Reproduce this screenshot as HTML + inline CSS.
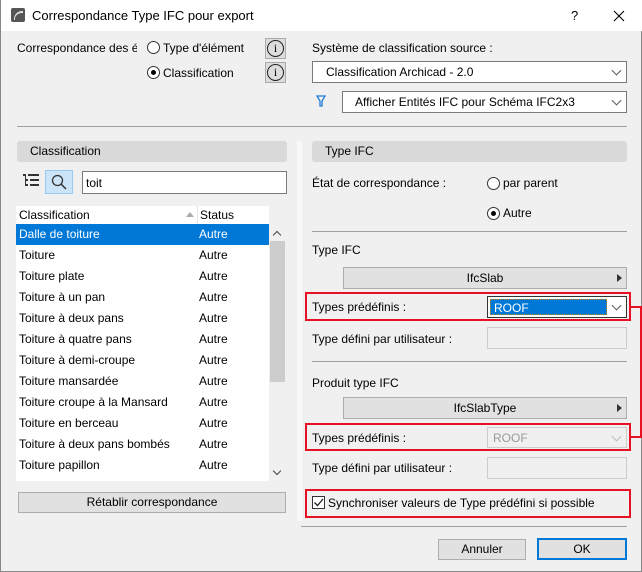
<!DOCTYPE html>
<html><head><meta charset="utf-8"><style>
*{box-sizing:border-box;margin:0;padding:0}
body{width:642px;height:572px;background:#f0f0f0;font-family:"Liberation Sans",sans-serif;font-size:12px;color:#000;position:relative;overflow:hidden;border:1px solid #888;border-top:none}
.a{position:absolute;white-space:nowrap}
.t{line-height:14px}
.sel{position:absolute;background:#fff;border:1px solid #7a7a7a}
.chev{position:absolute;right:6px;top:50%;width:7px;height:7px;border-right:1px solid #555;border-bottom:1px solid #555;transform:translateY(-70%) rotate(45deg)}
.rad{position:absolute;width:13px;height:13px;border:1px solid #333;border-radius:50%;background:#fff}
.rad.on::after{content:"";position:absolute;left:3px;top:3px;width:5px;height:5px;border-radius:50%;background:#000}
.sep{position:absolute;height:1px;background:#a0a0a0}
.btn{position:absolute;background:#e1e1e1;border:1px solid #adadad;text-align:center}
.hdr{position:absolute;background:#d9d9d9;border-radius:3px;height:21px;line-height:21px}
.red{position:absolute;border:2px solid #e81123}
.tri{position:absolute;right:4px;top:6px;width:0;height:0;border-left:5px solid #333;border-top:4px solid transparent;border-bottom:4px solid transparent}
.row{position:absolute;left:15px;width:253px;height:21px;line-height:21px}
.row span{position:absolute;left:3px}.row b{font-weight:normal;position:absolute;left:183px}
</style></head><body>
<div class="a" style="left:0;top:0;width:642px;height:31px;background:#fff"></div>
<div class="a" style="left:10px;top:8px;width:14px;height:14px;background:#555;border-radius:2px"></div>
<div class="a" style="left:13px;top:11px;width:9px;height:9px;border-top:2px solid #ddd;border-left:1px solid #ddd;border-radius:8px 0 0 0"></div>
<div class="a t" style="left:31px;top:9px;font-size:13px">Correspondance Type IFC pour export</div>
<div class="a t" style="left:570px;top:9px;font-size:13px">?</div>
<svg class="a" style="left:612px;top:10px" width="12" height="12"><path d="M1 1L11 11M11 1L1 11" stroke="#000" stroke-width="1.1"/></svg>

<div class="a t" style="left:16px;top:41px;width:120px;overflow:hidden">Correspondance des éléments</div>
<div class="rad" style="left:146px;top:41px"></div><div class="a t" style="left:162px;top:41px">Type d'élément</div>
<div class="rad on" style="left:146px;top:66px"></div><div class="a t" style="left:162px;top:66px">Classification</div>
<div class="a" style="left:264px;top:38px;width:21px;height:21px;background:#ddd;border:1px solid #aaa"><div class="a" style="left:1px;top:1px;width:17px;height:17px;border:1px solid #222;border-radius:50%;text-align:center;line-height:15px;font-size:12px;font-family:'Liberation Serif',serif">i</div></div>
<div class="a" style="left:264px;top:62px;width:21px;height:21px;background:#ddd;border:1px solid #aaa"><div class="a" style="left:1px;top:1px;width:17px;height:17px;border:1px solid #222;border-radius:50%;text-align:center;line-height:15px;font-size:12px;font-family:'Liberation Serif',serif">i</div></div>

<div class="a t" style="left:311px;top:41px">Système de classification source :</div>
<div class="sel" style="left:311px;top:61px;width:315px;height:22px"><div class="a t" style="left:13px;top:3px">Classification Archicad - 2.0</div><div class="chev"></div></div>
<svg class="a" style="left:315px;top:95px" width="10" height="12"><path d="M1 1H9L6 6V11H4V6Z" fill="none" stroke="#1e7ad8" stroke-width="1.3"/></svg>
<div class="sel" style="left:341px;top:91px;width:285px;height:22px"><div class="a t" style="left:12px;top:3px">Afficher Entités IFC pour Schéma IFC2x3</div><div class="chev"></div></div>
<div class="sep" style="left:16px;top:126px;width:610px"></div>

<div class="a" style="left:296px;top:141px;width:5px;height:380px;background:#f8f8f8"></div>
<div class="hdr" style="left:16px;top:141px;width:270px;padding-left:13px">Classification</div>
<svg class="a" style="left:22px;top:174px" width="17" height="13"><g fill="#333"><rect x="0" y="0" width="3" height="2"/><rect x="5" y="0" width="11" height="2"/><rect x="2" y="5" width="3" height="2"/><rect x="7" y="5" width="9" height="2"/><rect x="2" y="10" width="3" height="2"/><rect x="7" y="10" width="9" height="2"/><rect x="2" y="2" width="1" height="9"/></g></svg>
<div class="a" style="left:44px;top:170px;width:28px;height:24px;background:#cce4f7;border:1px solid #99c9ef"></div>
<svg class="a" style="left:50px;top:174px" width="16" height="16"><circle cx="6.5" cy="6.5" r="5" fill="none" stroke="#333" stroke-width="1.3"/><path d="M10 10L15 15" stroke="#333" stroke-width="1.5"/></svg>
<div class="sel" style="left:81px;top:171px;width:205px;height:23px"><div class="a t" style="left:3px;top:4px">toit</div></div>

<div class="a" style="left:15px;top:206px;width:253px;height:275px;background:#fff"></div>
<div class="a t" style="left:18px;top:208px">Classification</div>
<div class="a" style="left:185px;top:212px;border-bottom:5px solid #aaa;border-left:4px solid transparent;border-right:4px solid transparent"></div>
<div class="a" style="left:196px;top:206px;width:1px;height:18px;background:#e5e5e5"></div>
<div class="a t" style="left:199px;top:208px">Status</div>
<div class="row" style="top:224px;background:#0078d7;color:#fff"><span>Dalle de toiture</span><b>Autre</b></div>
<div class="row" style="top:245px"><span>Toiture</span><b>Autre</b></div>
<div class="row" style="top:266px"><span>Toiture plate</span><b>Autre</b></div>
<div class="row" style="top:287px"><span>Toiture à un pan</span><b>Autre</b></div>
<div class="row" style="top:308px"><span>Toiture à deux pans</span><b>Autre</b></div>
<div class="row" style="top:329px"><span>Toiture à quatre pans</span><b>Autre</b></div>
<div class="row" style="top:350px"><span>Toiture à demi-croupe</span><b>Autre</b></div>
<div class="row" style="top:371px"><span>Toiture mansardée</span><b>Autre</b></div>
<div class="row" style="top:392px"><span>Toiture croupe à la Mansard</span><b>Autre</b></div>
<div class="row" style="top:413px"><span>Toiture en berceau</span><b>Autre</b></div>
<div class="row" style="top:434px"><span>Toiture à deux pans bombés</span><b>Autre</b></div>
<div class="row" style="top:455px"><span>Toiture papillon</span><b>Autre</b></div>
<div class="a" style="left:268px;top:224px;width:16px;height:257px;background:#f0f0f0"></div>
<div class="a" style="left:273px;top:232px;width:6px;height:6px;border-left:1.5px solid #444;border-top:1.5px solid #444;transform:rotate(45deg)"></div>
<div class="a" style="left:269px;top:241px;width:15px;height:141px;background:#cdcdcd"></div>
<div class="a" style="left:273px;top:468px;width:6px;height:6px;border-right:1.5px solid #444;border-bottom:1.5px solid #444;transform:rotate(45deg)"></div>
<div class="btn" style="left:17px;top:492px;width:268px;height:21px;line-height:19px">Rétablir correspondance</div>

<div class="hdr" style="left:311px;top:141px;width:315px;padding-left:13px">Type IFC</div>
<div class="a t" style="left:311px;top:176px">État de correspondance :</div>
<div class="rad" style="left:486px;top:177px"></div><div class="a t" style="left:502px;top:176px">par parent</div>
<div class="rad on" style="left:486px;top:207px"></div><div class="a t" style="left:502px;top:206px">Autre</div>
<div class="sep" style="left:311px;top:231px;width:315px"></div>
<div class="a t" style="left:311px;top:243px">Type IFC</div>
<div class="btn" style="left:342px;top:267px;width:284px;height:22px;line-height:20px">IfcSlab<div class="tri"></div></div>
<div class="red" style="left:304px;top:292px;width:326px;height:29px"></div>
<div class="a t" style="left:311px;top:300px">Types prédéfinis :</div>
<div class="sel" style="left:486px;top:296px;width:140px;height:22px;border-color:#333"><div class="a" style="left:2px;top:2px;width:117px;height:16px;background:#0078d7;color:#fff;padding-left:3px;line-height:16px;border:1px dotted #c80">ROOF</div><div class="chev"></div></div>
<div class="a t" style="left:311px;top:332px">Type défini par utilisateur :</div>
<div class="a" style="left:486px;top:327px;width:140px;height:22px;border:1px solid #ccc;background:#f0f0f0"></div>
<div class="sep" style="left:311px;top:361px;width:315px"></div>
<div class="a t" style="left:311px;top:376px">Produit type IFC</div>
<div class="btn" style="left:342px;top:397px;width:284px;height:22px;line-height:20px">IfcSlabType<div class="tri"></div></div>
<div class="red" style="left:304px;top:423px;width:326px;height:28px"></div>
<div class="a t" style="left:311px;top:431px">Types prédéfinis :</div>
<div class="a" style="left:486px;top:427px;width:140px;height:21px;border:1px solid #ccc;background:#f0f0f0;color:#999"><div class="a t" style="left:5px;top:3px">ROOF</div><div class="chev" style="border-color:#bbb"></div></div>
<div class="a t" style="left:311px;top:461px">Type défini par utilisateur :</div>
<div class="a" style="left:486px;top:457px;width:140px;height:22px;border:1px solid #ccc;background:#f0f0f0"></div>
<div class="red" style="left:304px;top:489px;width:326px;height:29px"></div>
<div class="a" style="left:311px;top:496px;width:13px;height:13px;border:1px solid #333;background:#fff"></div>
<svg class="a" style="left:312px;top:497px" width="11" height="11"><path d="M1.5 5.5L4.5 8.5L10 2" fill="none" stroke="#222" stroke-width="1.3"/></svg>
<div class="a t" style="left:327px;top:496px">Synchroniser valeurs de Type prédéfini si possible</div>
<div class="a" style="left:630px;top:306px;width:11px;height:2px;background:#e81123"></div>
<div class="a" style="left:639px;top:306px;width:2px;height:132px;background:#e81123"></div>
<div class="a" style="left:630px;top:436px;width:11px;height:2px;background:#e81123"></div>
<div class="sep" style="left:300px;top:526px;width:326px"></div>
<div class="btn" style="left:437px;top:539px;width:88px;height:21px;line-height:19px">Annuler</div>
<div class="btn" style="left:536px;top:538px;width:90px;height:22px;line-height:18px;border:2px solid #0078d7">OK</div>
</body></html>
